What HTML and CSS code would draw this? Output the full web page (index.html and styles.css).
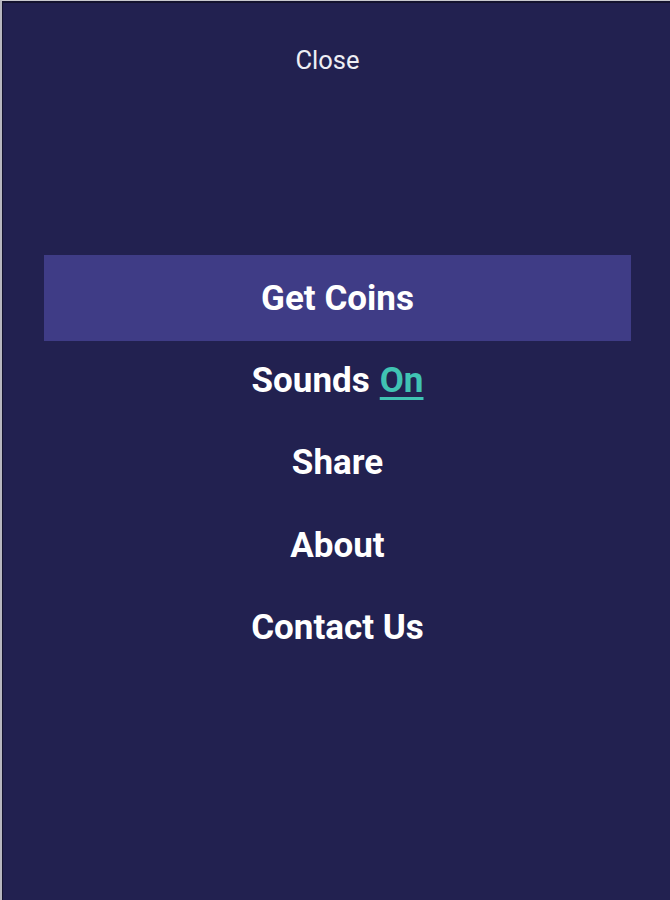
FILE: index.html
```html
<!DOCTYPE html>
<html lang="en">
<head>
    <meta charset="UTF-8">
    <meta name="viewport" content="width=device-width, initial-scale=1.0">
    <title>Menu</title>
    <link rel="stylesheet" href="styles.css">
</head>
<body>
    <div class="screen">
        <div class="top">
            <a class="close" href="#">Close</a>
        </div>
        <ul class="menu">
            <li class="item active">Get Coins</li>
            <li class="item">Sounds <span class="toggle">On</span></li>
            <li class="item">Share</li>
            <li class="item">About</li>
            <li class="item">Contact Us</li>
        </ul>
    </div>
</body>
</html>
```

FILE: styles.css
```css
html, body {
    margin: 0;
    height: 100%;
    background: #222150;
}

body {
    font-family: Roboto, "Liberation Sans", sans-serif;
    color: #fff;
}

.screen {
    box-sizing: border-box;
    height: 900px;
    border-top: 1px solid #c9c9cf;
    border-left: 2px solid #b7b7bf;
    box-shadow: inset 1px 2px 0 #14132e;
}

.top {
    display: flex;
    justify-content: center;
    padding: 44px 17px 0 0;
    height: 210px;
}

.close {
    color: #eeeef4;
    text-decoration: none;
    font-size: 25.5px;
    line-height: 30px;
}

.menu {
    list-style: none;
    margin: 0;
    padding: 0 39px 0 42px;
    display: flex;
    flex-direction: column;
}

.item {
    height: 82.5px;
    display: flex;
    justify-content: center;
    align-items: center;
    font-size: 35px;
    font-weight: 700;
    gap: 10px;
}

.item.active {
    height: 86px;
    margin: 0 0 -2px;
    background: #3f3c86;
}

.toggle {
    color: #40c3b3;
    text-decoration: underline;
    text-decoration-thickness: 3px;
    text-underline-offset: 5px;
}
```
